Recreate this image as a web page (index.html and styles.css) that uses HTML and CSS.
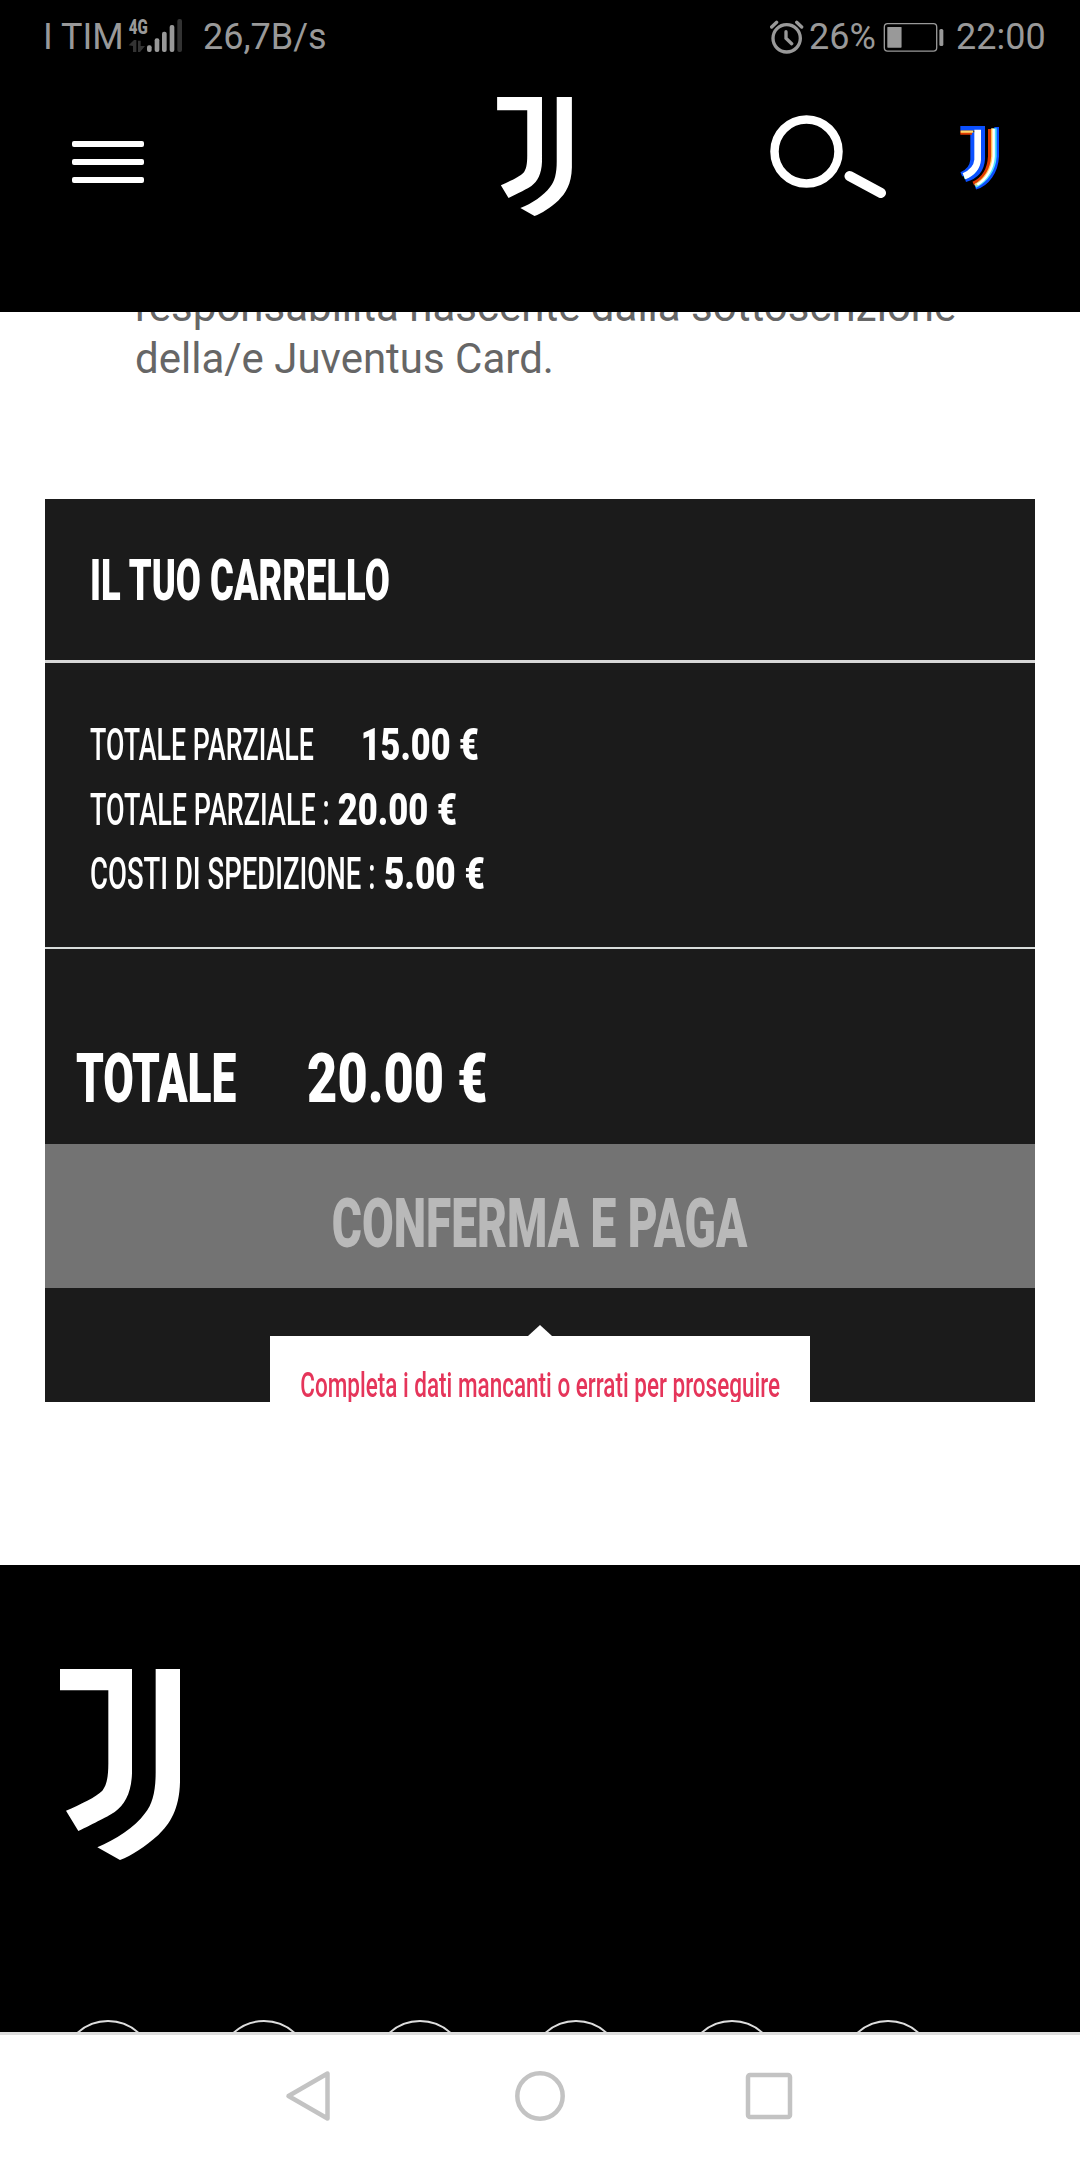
FILE: index.html
```
<!DOCTYPE html>
<html lang="it">

<head>
    <meta charset="UTF-8">
    <meta name="viewport" content="width=device-width, initial-scale=1.0">
    <title>Juventus Card</title>
    <link rel="stylesheet" href="styles.css">
</head>

<body>
    <svg class="defs" width="0" height="0">
        <symbol id="logo" viewBox="0 0 360 573">
            <path d="M0 0H216V313C214 370 195 407 165 428C150 439 100 464 55 486L18 425C60 407 110 383 127 365C140 348 145 325 145 283V64H0Z" />
            <path d="M287 0H360V340C358 420 330 465 295 498C255 534 215 560 180 573L112 535C165 513 225 475 255 433C278 405 287 365 287 310Z" />
        </symbol>
    </svg>

    <div class="status">
        <span class="carrier">I TIM</span>
        <svg class="signal" viewBox="384 54 165 105">
            <text class="net" x="386" y="102" textLength="57" lengthAdjust="spacingAndGlyphs">4G</text>
            <path class="dark" d="M386 136L402 120H409V156H399V138ZM414 122H422V138H435L420 156H414Z" />
            <rect x="441" y="136" width="14" height="20" rx="6" />
            <rect x="464" y="115" width="14" height="41" rx="6" />
            <rect x="486" y="95" width="14" height="61" rx="6" />
            <rect x="509" y="75" width="14" height="81" rx="6" />
            <rect class="dark" x="532" y="57" width="14" height="99" rx="6" />
        </svg>
        <span class="speed">26,7B/s</span>
        <svg class="alarm" viewBox="87 57 102 105">
            <circle cx="137" cy="112" r="41" />
            <path d="M135 92V112L152 128M92 78L107 64M167 64L182 78" />
        </svg>
        <span class="percent">26%</span>
        <svg class="battery" viewBox="430 64 184 92">
            <rect class="case" x="434" y="68" width="158" height="83" rx="10" />
            <rect x="443" y="78" width="43" height="63" rx="2" />
            <rect x="600" y="84" width="12" height="52" rx="5" />
        </svg>
        <span class="clock">22:00</span>
    </div>

    <header class="header">
        <div class="burger">
            <i></i>
            <i></i>
            <i></i>
        </div>
        <svg class="logo"><use href="#logo" /></svg>
        <svg class="search" viewBox="0 0 118 84">
            <circle cx="36.500" cy="36.500" r="32" />
            <path d="M79.500 61L111 78" />
        </svg>
        <svg class="logo-mini" viewBox="657 376 126 195">
            <g stroke="#0b50ff" stroke-width="14">
                <path d="M661 386H728V478C726 512 704 532 676 540" />
                <path d="M698 398V480C696 502 684 516 664 524" />
                <path d="M770 382V470C768 515 742 552 706 563" />
            </g>
            <path stroke="#e03a00" stroke-width="12" d="M661 399H696M750 388V470C748 508 730 538 700 552" />
            <g stroke="#4fe0ff" stroke-width="12">
                <path d="M764 386V470C762 510 738 543 706 559" />
                <path d="M672 533C698 524 714 505 714 480" />
            </g>
            <path stroke="#ffd76a" stroke-width="7" d="M662 396H700M757 386V470C755 508 735 540 706 556" />
            <path stroke="#fff" stroke-width="20" d="M713 390V480C711 505 694 520 672 530" />
            <path stroke="#fff" stroke-width="7" d="M761 388V470C759 508 738 540 712 555" />
        </svg>
    </header>

    <main class="main">
        <p class="text">responsabilità nascente dalla sottoscrizione<br>della/e Juventus Card.</p>

        <section class="cart">
            <div class="cart-head">
                <h2 class="narrow">IL TUO CARRELLO</h2>
            </div>
            <div class="cart-rows">
                <p class="narrow row1">TOTALE PARZIALE <b>15.00 €</b></p>
                <p class="narrow row2">TOTALE PARZIALE : <b>20.00 €</b></p>
                <p class="narrow row3">COSTI DI SPEDIZIONE : <b>5.00 €</b></p>
            </div>
            <div class="cart-total">
                <p class="narrow total">TOTALE <b>20.00 €</b></p>
            </div>
            <button class="pay" disabled><span class="narrow">CONFERMA E PAGA</span></button>
            <div class="error">
                <span class="narrow">Completa i dati mancanti o errati per proseguire</span>
            </div>
        </section>
    </main>

    <footer class="footer">
        <svg class="logo-big"><use href="#logo" /></svg>
        <div class="social">
            <i></i>
            <i></i>
            <i></i>
            <i></i>
            <i></i>
            <i></i>
        </div>
    </footer>

    <nav class="nav">
        <svg viewBox="0 0 52 52"><path d="M42.5 3.5V48.500L3.500 26Z" /></svg>
        <svg viewBox="0 0 52 52"><circle cx="26" cy="26" r="22.700" /></svg>
        <svg viewBox="0 0 52 52"><rect x="5" y="5" width="42" height="42" rx="2" /></svg>
    </nav>
</body>

</html>
```
FILE: styles.css
```
* {
    box-sizing: border-box;
}

body {
    width: 1080px;
    height: 2160px;
    margin: 0;
    overflow: hidden;
    display: flex;
    flex-direction: column;
    background: white;
    font-family: Roboto, "Liberation Sans", sans-serif;
}

p,
h2 {
    margin: 0;
}

svg {
    display: block;
    flex: none;
}

.defs {
    position: absolute;
}

/* status bar */
.status {
    flex: none;
    height: 75px;
    padding: 0 35px 0 43px;
    display: flex;
    align-items: center;
    background: black;
    color: #999;
    font-size: 36px;
    line-height: 75px;
    white-space: nowrap;
}

.carrier {
    width: 85px;
}

.signal {
    width: 55px;
    height: 35px;
    margin-top: -4px;
    overflow: visible;
    fill: #999;
}

.signal .dark {
    fill: #333;
}

.net {
    font-size: 62px;
    font-weight: 900;
}

.speed {
    margin-left: 20px;
}

.alarm {
    width: 34px;
    height: 35px;
    margin-left: auto;
    fill: none;
    stroke: #999;
    stroke-width: 10;
    stroke-linecap: round;
}

.percent {
    margin-left: 5px;
    width: 74px;
}

.battery {
    width: 61px;
    height: 31px;
    fill: #999;
}

.battery .case {
    fill: none;
    stroke: #999;
    stroke-width: 4;
}

.clock {
    margin-left: 12px;
    width: 89px;
}

/* header */
.header {
    flex: none;
    height: 237px;
    padding: 22px 79px 0 72px;
    display: flex;
    align-items: flex-start;
    background: black;
}

.burger {
    width: 72px;
    height: 42px;
    margin-top: 44px;
    display: flex;
    flex-direction: column;
    justify-content: space-between;
}

.burger i {
    height: 6px;
    border-radius: 2px;
    background: white;
}

.logo {
    width: 75px;
    height: 119px;
    margin-left: 353px;
    fill: white;
}

.search {
    width: 118px;
    height: 84px;
    margin: 18px 0 0 198px;
    fill: none;
    stroke: white;
    stroke-width: 8.500;
    stroke-linecap: round;
}

.search path {
    stroke-width: 10;
}

.logo-mini {
    width: 42px;
    height: 65px;
    margin: 28px 0 0 71px;
    fill: none;
    filter: blur(0.6px);
}

/* page */
.main {
    flex: none;
    height: 1253px;
    overflow: hidden;
    padding: 0 45px;
}

.text {
    height: 187px;
    margin-top: -31px;
    margin-bottom: 31px;
    padding-left: 90px;
    color: #666;
    font-size: 42px;
    line-height: 52px;
    white-space: nowrap;
}

/* tall condensed lettering */
.narrow {
    display: inline-block;
    transform: scaleX(0.638);
    transform-origin: left center;
    white-space: nowrap;
    font-weight: 900;
}

.narrow b {
    display: inline-block;
    transform: scaleX(1.28);
    transform-origin: left center;
    font-weight: 900;
}

.cart {
    height: 903px;
    overflow: hidden;
    background: #1b1b1b;
    color: white;
}

.cart-head {
    height: 164px;
    padding-left: 45px;
    border-bottom: 3px solid #d8d8d8;
}

.cart-head h2 {
    font-size: 57px;
    line-height: 163px;
}

.cart-rows {
    height: 286px;
    padding: 50px 0 0 45px;
    border-bottom: 2px solid #d8dcdb;
    display: flex;
    flex-direction: column;
    align-items: flex-start;
}

.cart-rows p {
    font-size: 45px;
    line-height: 64.500px;
    font-weight: 500;
}

.cart-rows .row1 {
    transform: scaleX(0.595);
}

.cart-rows .row2 {
    transform: scaleX(0.6);
}

.cart-rows .row3 {
    transform: scaleX(0.611);
}

.row1 b {
    margin-left: 68px;
}

.row2 b,
.row3 b {
    margin-left: 3px;
}

.cart-total {
    height: 195px;
    padding: 90px 0 0 31px;
}

.cart-total p {
    font-size: 69px;
    line-height: 80px;
    transform: scaleX(0.642);
}

.cart-total b {
    margin-left: 93px;
    transform: scaleX(1.18);
}

.pay {
    display: flex;
    justify-content: center;
    align-items: center;
    width: 100%;
    height: 144px;
    padding: 16px 0 0;
    border: 0;
    background: #737373;
    color: #b9b9b9;
    font-family: inherit;
    font-size: 69px;
    line-height: 80px;
}

.pay .narrow {
    transform: scaleX(0.667);
    transform-origin: center;
}

.error {
    position: relative;
    width: 540px;
    height: 120px;
    margin: 48px auto 0;
    display: flex;
    justify-content: center;
    background: white;
    color: #e5355a;
    font-size: 35px;
    line-height: 100px;
}

.error::before {
    content: "";
    position: absolute;
    top: -11px;
    left: 258px;
    border: 12px solid transparent;
    border-top: 0;
    border-bottom: 11px solid white;
}

.error .narrow {
    transform: scaleX(0.643);
    transform-origin: center;
    font-weight: 500;
}

/* footer */
.footer {
    flex: none;
    height: 467px;
    padding: 104px 60px 0;
    overflow: hidden;
    background: black;
}

.logo-big {
    width: 120px;
    height: 191px;
    fill: white;
}

.social {
    display: flex;
    gap: 64px;
    margin-top: 160px;
    padding-left: 2px;
}

.social i {
    flex: none;
    width: 92px;
    height: 92px;
    border: 2px solid #ddd;
    border-radius: 50%;
}

/* android buttons */
.nav {
    flex: none;
    height: 128px;
    padding-bottom: 3px;
    border-top: 3px solid #ddd;
    display: flex;
    justify-content: center;
    align-items: center;
    gap: 177px;
    background: white;
}

.nav svg {
    width: 52px;
    height: 52px;
    fill: none;
    stroke: #c3c3c3;
    stroke-width: 4.500;
    stroke-linejoin: round;
}
```
